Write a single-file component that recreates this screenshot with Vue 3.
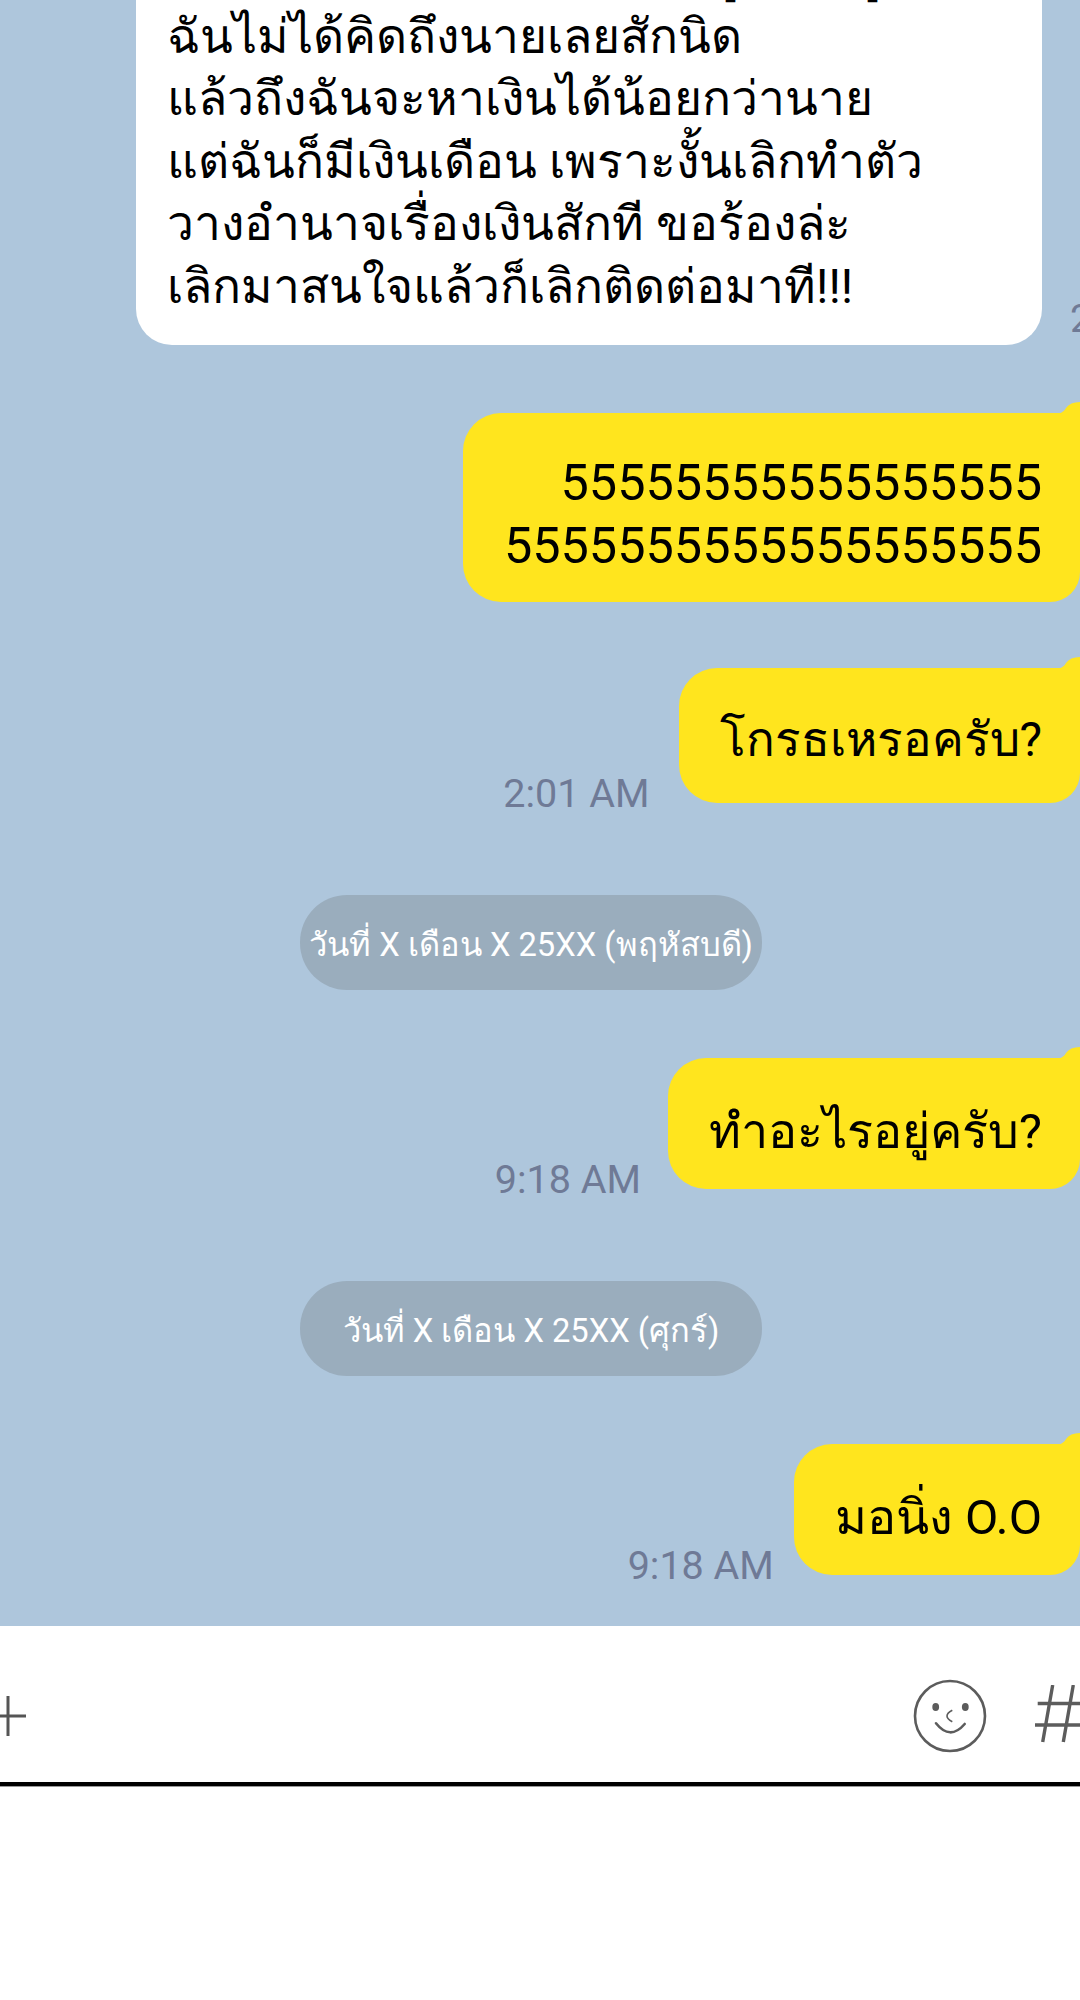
<script setup>
const clipped = [
  'นายจะมาบอกอะไรให้ฉันอยู่ต่อรับรู้',
  'ฉันไม่ได้คิดถึงนายเลยสักนิด',
  'แล้วถึงฉันจะหาเงินได้น้อยกว่านาย',
  'แต่ฉันก็มีเงินเดือน เพราะงั้นเลิกทำตัว',
  'วางอำนาจเรื่องเงินสักที ขอร้องล่ะ',
  'เลิกมาสนใจแล้วก็เลิกติดต่อมาที!!!'
]

const items = [
  { type: 'me', lines: ['55555555555555555', '5555555555555555555'], cls: 'first' },
  { type: 'me', lines: ['โกรธเหรอครับ?'], time: '2:01 AM', gap: 29, cls: 'tall' },
  { type: 'date', text: 'วันที่ X เดือน X 25XX (พฤหัสบดี)' },
  { type: 'me', lines: ['ทำอะไรอยู่ครับ?'], time: '9:18 AM', gap: 27 },
  { type: 'date', text: 'วันที่ X เดือน X 25XX (ศุกร์)' },
  { type: 'me', lines: ['มอนิ่ง O.O'], time: '9:18 AM', gap: 20 }
]
</script>

<template>
  <main class="screen">
    <section class="chat">
      <div class="row row-in">
        <div class="bubble-in">
          <p v-for="line in clipped" :key="line">{{ line }}</p>
        </div>
        <span class="time">2:01 AM</span>
      </div>

      <template v-for="(item, i) in items" :key="i">
        <div v-if="item.type === 'date'" class="date">{{ item.text }}</div>
        <div v-else class="row row-me" :style="{ gap: item.gap + 'px' }">
          <span v-if="item.time" class="time">{{ item.time }}</span>
          <div class="bubble-me" :class="item.cls">
            <p v-for="line in item.lines" :key="line">{{ line }}</p>
            <svg class="tail" width="22" height="16" viewBox="0 0 22 16">
              <path d="M0 12Q6 10 8 6Q12 0 22 0V16H0Z" fill="#ffe51e" />
            </svg>
          </div>
        </div>
      </template>
    </section>

    <footer class="input-bar">
      <svg class="plus" width="27" height="42" viewBox="0 0 27 42">
        <path d="M0 21H26M8 1V41" stroke="#555" stroke-width="3" fill="none" />
      </svg>
      <div class="bar-right">
        <svg width="74" height="74" viewBox="-37 -37 74 74">
          <circle r="35" fill="none" stroke="#5c5c5c" stroke-width="2.6" />
          <ellipse cx="-14.3" cy="-9" rx="3.4" ry="4" fill="#5c5c5c" />
          <ellipse cx="15.3" cy="-9" rx="3.4" ry="4" fill="#5c5c5c" />
          <path d="M2.3 -5.7Q-3 -3 -3 0Q-3 3 2.3 5.7" fill="none" stroke="#5c5c5c" stroke-width="1.6" />
          <path d="M-14 7.3Q0 25 14.7 8" fill="none" stroke="#5c5c5c" stroke-width="2.6" stroke-linecap="round" />
        </svg>
        <svg class="hash" width="45" height="58" viewBox="0 0 45 58">
          <path d="M17.7 0L7.7 57M38.3 0L28.3 57M2.7 18.5H45M0 40H45" fill="none" stroke="#5c5c5c" stroke-width="3.4" />
        </svg>
      </div>
    </footer>
  </main>
</template>

<style scoped>
.screen {
  width: 1080px;
  height: 2000px;
  overflow: hidden;
  background: #fff;
  font-family: Roboto, "Noto Sans", sans-serif;
}
.chat {
  height: 1626px;
  box-sizing: border-box;
  padding-bottom: 51px;
  background: #aec6dc;
  overflow: hidden;
  display: flex;
  flex-direction: column;
  justify-content: flex-end;
  gap: 68px;
}
.chat > * {
  flex-shrink: 0;
}
p {
  margin: 0;
  white-space: nowrap;
}
.row {
  display: flex;
  align-items: flex-end;
}
.row-in {
  padding-left: 136px;
  gap: 28px;
  width: 1200px;
}
.row-in .time {
  margin-bottom: 4px;
}
.row-me {
  justify-content: flex-end;
}
.bubble-in {
  width: 906px;
  box-sizing: border-box;
  padding: 0 30px 27px 31px;
  background: #fff;
  border-radius: 0 0 36px 36px;
  font-size: 48px;
  line-height: 62.5px;
  color: #000;
}
.bubble-me {
  position: relative;
  box-sizing: border-box;
  padding: 42px 38px 26px 41px;
  background: #ffe51e;
  border-radius: 38px 0 30px 38px;
  font-size: 48.5px;
  line-height: 63px;
  color: #000;
  text-align: right;
}
.bubble-me.tall {
  font-size: 47.6px;
  padding-top: 41px;
  padding-bottom: 31px;
}
.bubble-me.first {
  font-size: 50.4px;
  line-height: 62.5px;
  padding: 39px 38px 25px 41px;
  margin-bottom: -2px;
}
.tail {
  position: absolute;
  right: 0;
  top: -11px;
}
.time {
  flex: none;
  margin-bottom: -13px;
  font-size: 39.5px;
  line-height: 44px;
  font-weight: 400;
  color: #6f7a96;
}
.date {
  align-self: flex-start;
  margin: 24px 0 0 300px;
  width: 462px;
  height: 95px;
  box-sizing: border-box;
  padding-top: 3px;
  border-radius: 47px;
  background: #9aadbd;
  color: #fff;
  font-size: 32.7px;
  display: flex;
  align-items: center;
  justify-content: center;
  white-space: nowrap;
}
.input-bar {
  height: 160px;
  box-sizing: border-box;
  border-bottom: 4px solid #000;
  box-shadow: 0 1px 0 #999;
  background: #fff;
  display: flex;
  align-items: center;
  justify-content: space-between;
  padding-top: 23px;
  overflow: hidden;
}
.plus,
.hash {
  display: block;
}
.hash {
  margin-top: -4px;
}
.bar-right {
  display: flex;
  align-items: center;
  gap: 48px;
}
</style>

<style>
html, body {
  margin: 0;
  background: #fff;
}
</style>
